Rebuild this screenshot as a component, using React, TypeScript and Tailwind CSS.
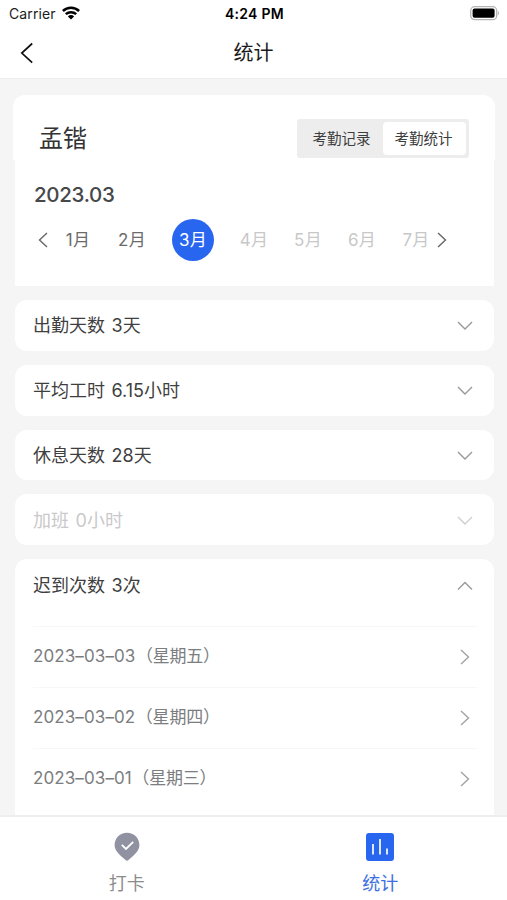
import { useState } from "react";
import clsx from "clsx";

type Direction = "left" | "right" | "up" | "down";

const chevrons: Record<Direction, { w: number; h: number; d: string }> = {
  left: { w: 10, h: 16, d: "M9 1 L1.5 8 L9 15" },
  right: { w: 10, h: 16, d: "M1 1 L8.5 8 L1 15" },
  up: { w: 16, h: 10, d: "M1 8.5 L8 1.5 L15 8.5" },
  down: { w: 16, h: 10, d: "M1 1 L8 8 L15 1" },
};

function Chevron({ dir, className }: { dir: Direction; className?: string }) {
  const { w, h, d } = chevrons[dir];
  return (
    <svg width={w} height={h} viewBox={`0 0 ${w} ${h}`} fill="none" stroke="currentColor" strokeWidth="1.4" className={className}>
      <path d={d} />
    </svg>
  );
}

function StatusBar() {
  return (
    <div className="grid h-7 grid-cols-3 items-center pl-[9px] pr-[7px] text-sm text-[#1c1c1c]">
      <div className="flex items-center gap-[6px]">
        <span className="tracking-[0.1px]">Carrier</span>
        <svg width="18" height="14" viewBox="0 0 18 14" fill="none" stroke="#000" strokeWidth="2.5" className="-mt-[2px]">
          <path d="M0.9 5 A11.7 11.7 0 0 1 17.1 5" />
          <path d="M3.8 8.2 A7.6 7.6 0 0 1 14.2 8.2" />
          <path d="M9 13.4 L5.9 10.4 A4.4 4.4 0 0 1 12.1 10.4 Z" fill="#000" stroke="none" />
        </svg>
      </div>
      <span className="text-center text-[14px] font-semibold tracking-[0.3px] text-black">4:24 PM</span>
      <svg width="31" height="15" viewBox="0 0 31 15" className="-mt-[2px] justify-self-end">
        <rect x="1.7" y="0.7" width="26" height="13" rx="4" fill="#fff" stroke="#b5b5b5" strokeWidth="1.3" />
        <rect x="3.6" y="2.6" width="22" height="9.2" rx="2" fill="#000" />
        <path d="M28.9 5 Q31 7.2 28.9 9.4 Z" fill="#b5b5b5" />
      </svg>
    </div>
  );
}

function NavBar() {
  return (
    <div className="grid h-[51px] grid-cols-3 items-center border-b border-[#ededed] pl-5">
      <svg width="14" height="22" viewBox="0 0 14 22" fill="none" stroke="#111" strokeWidth="1.7">
        <path d="M12.2 1.5 L1.8 11 L12.2 20.7" />
      </svg>
      <h1 className="-ml-5 text-center text-xl text-[#1a1a1a]">统计</h1>
    </div>
  );
}

const months = [1, 2, 3, 4, 5, 6, 7];
const currentMonth = 3;

function MonthPicker() {
  return (
    <div className="flex h-[42px] items-center pl-[23px]">
      <Chevron dir="left" className="text-[#666]" />
      <div className="flex flex-1 items-center pl-[3px]">
        {months.map((m) => (
          <div
            key={m}
            className={clsx(
              "flex shrink-0 items-center justify-center pt-[2px] text-[17px] tracking-[0.3px]",
              m === currentMonth
                ? "mx-[13px] h-[42px] w-[42px] rounded-full bg-[#2866f0] text-white"
                : "w-[54px]",
              m < currentMonth && "text-[#6b6b6b]",
              m > currentMonth && "text-[#c8c8c8]",
            )}
          >
            {m}月
          </div>
        ))}
        <Chevron dir="right" className="-ml-[6px] text-[#666]" />
      </div>
    </div>
  );
}

function Summary() {
  return (
    <section>
      <div className="-ml-[2px] -mr-px flex h-[65px] items-start justify-between rounded-t-xl bg-white pl-[26px] pr-[26px] pt-6">
        <span className="pt-[2px] text-2xl leading-9 text-[#333]">孟锴</span>
        <div className="flex h-[39px] items-center rounded-[3px] bg-[#ededed] p-[3px] text-[14.5px] text-[#3d3d3d]">
          <button className="h-full w-[83px]">考勤记录</button>
          <button className="h-full w-[83px] rounded-[4px] bg-white pr-[2px]">考勤统计</button>
        </div>
      </div>
      <div className="h-[126px] bg-white pt-5">
        <div className="pl-[19px] text-[20.5px] font-medium leading-[30px] tracking-[-0.3px] text-[#46484a]">2023.03</div>
        <div className="pt-[9px]">
          <MonthPicker />
        </div>
      </div>
    </section>
  );
}

const stats = [
  { title: "出勤天数 3天" },
  { title: "平均工时 6.15小时" },
  { title: "休息天数 28天" },
  { title: "加班 0小时", disabled: true },
];

const lateDays = [
  { date: "2023–03–03", weekday: "（星期五）" },
  { date: "2023–03–02", weekday: "（星期四）" },
  { date: "2023–03–01", weekday: "（星期三）" },
];

function StatCard({ title, disabled }: { title: string; disabled?: boolean }) {
  return (
    <button
      disabled={disabled}
      className={clsx(
        "flex h-[50.8px] w-full shrink-0 items-center justify-between rounded-xl bg-white pl-[18px] pr-[21px] pt-[2px] text-lg [word-spacing:1.5px]",
        disabled ? "text-[#c9c9c9]" : "text-[#3f3f3f]",
      )}
    >
      <span>{title}</span>
      <Chevron dir="down" className={disabled ? "text-[#cfcfcf]" : "text-[#999]"} />
    </button>
  );
}

function LateCard() {
  const [open, setOpen] = useState(true);
  return (
    <section className="flex-1 rounded-t-xl bg-white">
      <button
        onClick={() => setOpen(!open)}
        className="flex h-[50.8px] w-full items-center justify-between pl-[18px] pr-[21px] pt-[2px] text-lg text-[#3f3f3f] [word-spacing:1.5px]"
      >
        <span>迟到次数 3次</span>
        <Chevron dir={open ? "up" : "down"} className="text-[#999]" />
      </button>
      {open && (
        <ul className="ml-[18px] mr-[17px] mt-4">
          {lateDays.map(({ date, weekday }) => (
            <li
              key={date}
              className="flex h-[61px] items-center justify-between border-t border-[#f7f7f7] pr-[7px] text-[17px] text-[#7b7d7f]"
            >
              <span className="flex">
                <span className="tracking-[0.1px]">{date}</span>
                <span className="pl-[9px] tracking-[-0.2px] [font-feature-settings:'halt']">{weekday}</span>
              </span>
              <Chevron dir="right" className="text-[#a3a3a3]" />
            </li>
          ))}
        </ul>
      )}
    </section>
  );
}

function TabBar() {
  return (
    <nav className="grid h-[85px] shrink-0 grid-cols-2 border-t-2 border-[#eeeeee] bg-white text-lg">
      <button className="flex flex-col items-center pt-[15px] text-[#8c8c8c]">
        <svg width="26" height="30" viewBox="0 0 26 30">
          <path d="M13 0.8 C6 0.8 0.6 6.2 0.6 13 C0.6 18.4 4.8 22.2 9 25.8 L11.5 28 Q13 29.3 14.5 28 L17 25.8 C21.2 22.2 25.4 18.4 25.4 13 C25.4 6.2 20 0.8 13 0.8 Z" fill="#9192a1" />
          <path d="M7.8 12.8 L12 17 L19.2 9.8" fill="none" stroke="#fff" strokeWidth="1.8" />
        </svg>
        <span className="mt-[9px] leading-[26px]">打卡</span>
      </button>
      <button className="flex flex-col items-center pt-[15px] text-[#3d6fe0]">
        <svg width="30" height="30" viewBox="0 0 30 30">
          <rect x="1" y="1" width="28" height="28" rx="3" fill="#2866f0" />
          <path d="M8 12 V22.4 M15 7 V22.4 M22 16.4 V22.4" stroke="#dce8ff" strokeWidth="2" />
        </svg>
        <span className="mt-[9px] leading-[26px]">统计</span>
      </button>
    </nav>
  );
}

export default function App() {
  return (
    <div className="flex h-[900px] w-[507px] flex-col overflow-hidden bg-white font-[Inter,'Noto_Sans_CJK_SC',sans-serif]">
      <StatusBar />
      <NavBar />
      <main className="flex flex-1 flex-col gap-[14px] bg-[#f5f5f5] pl-[15px] pr-[13px] pt-4">
        <Summary />
        {stats.map((s) => (
          <StatCard key={s.title} title={s.title} disabled={s.disabled} />
        ))}
        <LateCard />
      </main>
      <TabBar />
    </div>
  );
}
